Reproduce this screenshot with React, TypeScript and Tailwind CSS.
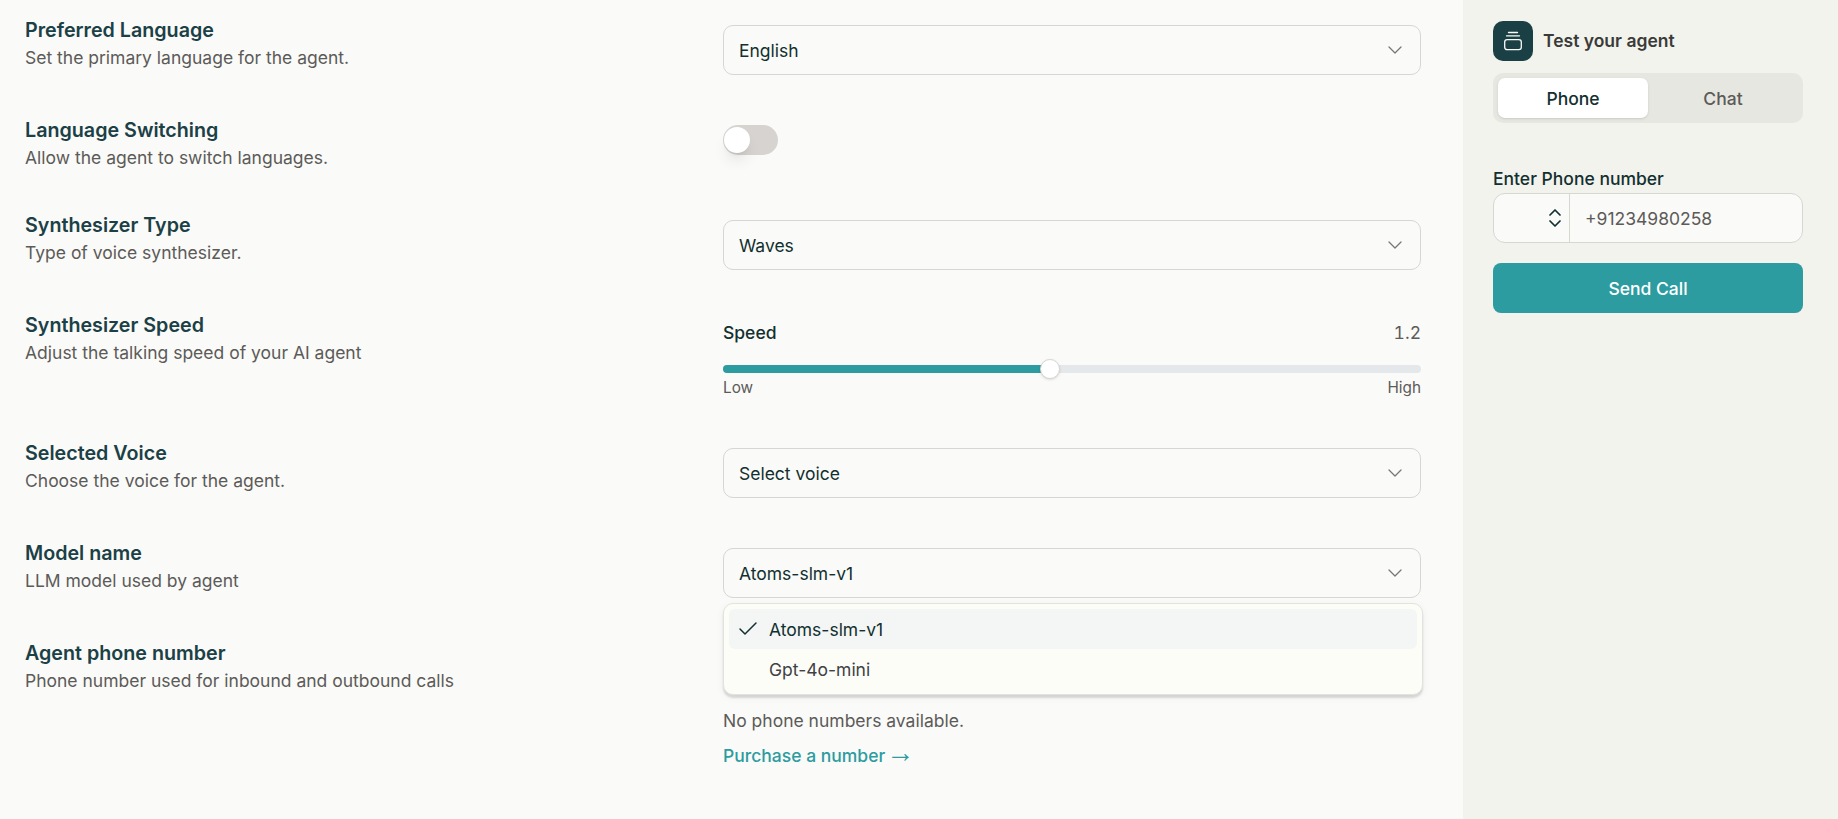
import React from "react";
import { ChevronDown, Check, ChevronsUpDown } from "lucide-react";

function Info({ title, desc }: { title: string; desc: string }) {
  return (
    <div className="w-[698px] shrink-0">
      <div className="text-[19.7px] leading-[25px] font-semibold text-[#1b4046]">{title}</div>
      <div className="mt-[3px] text-[17.5px] leading-[24px] text-[#5c5b58]">{desc}</div>
    </div>
  );
}

function Select({ value }: { value: string }) {
  return (
    <div className="mt-[7px] flex h-[50px] w-[698px] items-center justify-between rounded-[10px] border border-[#d6d6d3] bg-[#fafaf8] pl-[15px] pr-[13px]">
      <span className="pt-[2px] text-[17.5px] text-[#12302f]">{value}</span>
      <ChevronDown size={24} className="text-[#77767a]" strokeWidth={1.25} />
    </div>
  );
}

export default function App() {
  return (
    <div className="flex h-[819px] w-full overflow-hidden bg-[#fafaf8] font-['Inter',sans-serif]">
      <main className="w-[1463px] shrink-0 pl-[25px] pt-[18px]">
        <div className="flex h-[57px]">
          <Info title="Preferred Language" desc="Set the primary language for the agent." />
          <Select value="English" />
        </div>
        <div className="mt-[43px] flex h-[52px]">
          <Info title="Language Switching" desc="Allow the agent to switch languages." />
          <div className="mt-[7px] flex h-[30px] w-[55px] items-center rounded-full bg-[#d6d3d1] pl-[1px]">
            <div className="h-[26px] w-[26px] rounded-full bg-white shadow-lg" />
          </div>
        </div>
        <div className="mt-[43px] flex h-[57px]">
          <Info title="Synthesizer Type" desc="Type of voice synthesizer." />
          <Select value="Waves" />
        </div>
        <div className="mt-[43px] flex h-[85px]">
          <Info title="Synthesizer Speed" desc="Adjust the talking speed of your AI agent" />
          <div className="w-[698px] pt-[8px]">
            <div className="flex h-[24px] items-center justify-between text-[17.5px]">
              <span className="font-medium text-[#12302f]">Speed</span>
              <span className="tabular-nums text-[#5c5b58]">1.2</span>
            </div>
            <div className="relative mt-[20px] h-[8px] rounded-full bg-[#e4e8ea]">
              <div className="h-full w-[326px] rounded-full bg-[#2d9ca0]" />
              <div className="absolute left-[317px] top-[-6px] h-[20px] w-[20px] rounded-full border border-[#d6d6d3] bg-white shadow-sm" />
            </div>
            <div className="mt-[5px] flex justify-between text-[15.3px] leading-[20px] text-[#5c5b58]">
              <span>Low</span>
              <span>High</span>
            </div>
          </div>
        </div>
        <div className="mt-[43px] flex h-[57px]">
          <Info title="Selected Voice" desc="Choose the voice for the agent." />
          <Select value="Select voice" />
        </div>
        <div className="mt-[43px] flex h-[57px]">
          <Info title="Model name" desc="LLM model used by agent" />
          <div className="relative h-[57px]">
            <Select value="Atoms-slm-v1" />
            <div className="absolute left-0 top-[62px] z-10 h-[92px] w-[700px] rounded-[10px] border border-[#e2e2df] bg-[#fdfdf8] px-[5px] pt-[5px] shadow-[0_3px_2px_rgba(0,0,0,0.12),0_2px_8px_rgba(0,0,0,0.05)]">
              <div className="relative flex h-[40px] items-center rounded-[6px] bg-[#f4f6f6] pl-[40px] pr-[10px]">
                <Check size={24} strokeWidth={1.5} className="absolute left-[7px] text-[#12302f]" />
                <span className="pt-[2px] text-[17.5px] text-[#12302f]">Atoms-slm-v1</span>
              </div>
              <div className="flex h-[40px] items-center pl-[40px] pt-[2px] text-[17.5px] text-[#3f4144]">Gpt-4o-mini</div>
            </div>
          </div>
        </div>
        <div className="mt-[43px] flex">
          <Info title="Agent phone number" desc="Phone number used for inbound and outbound calls" />
          <div className="pt-[68px]">
            <div className="text-[17.5px] leading-[24px] text-[#5c5b58]">No phone numbers available.</div>
            <div className="mt-[10px] h-[24px] text-[17.5px] leading-[24px] font-medium text-[#2d9ca0]">
              <span>Purchase a number</span>
              <span className="ml-[1px] font-['Liberation_Sans',sans-serif] text-[28px] leading-[20px] font-normal">→</span>
            </div>
          </div>
        </div>
      </main>
      <aside className="flex-1 bg-[#f3f3ee] pl-[30px] pr-[35px] pt-[21px]">
        <div className="flex items-center gap-[10px]">
          <div className="flex h-[40px] w-[40px] items-center justify-center rounded-[10px] bg-[#1a4045]">
            <svg width="20" height="20" viewBox="0 0 20 20" fill="none" stroke="#fafaf8" strokeWidth="1.3" strokeLinecap="round">
              <path d="M5.5 1.5h9" />
              <path d="M3.5 4.8h13" />
              <rect x="1.7" y="8.7" width="16.6" height="10" rx="2.4" />
            </svg>
          </div>
          <span className="text-[17.5px] font-semibold text-[#3a3a38]">Test your agent</span>
        </div>
        <div className="mt-[12px] flex h-[50px] rounded-[10px] bg-[#e7e7e2] p-[5px]">
          <div className="flex flex-1 items-center justify-center rounded-[7px] bg-white pt-[2px] text-[17.5px] font-medium text-[#12302f] shadow-sm">Phone</div>
          <div className="flex flex-1 items-center justify-center pt-[2px] text-[17.5px] font-medium text-[#5c5b58]">Chat</div>
        </div>
        <div className="mt-[44px] text-[17.5px] leading-[24px] font-medium text-[#12302f]">Enter Phone number</div>
        <div className="mt-[2px] flex h-[50px] rounded-[12px] border border-[#d6d6d3] bg-[#fafaf8]">
          <div className="flex w-[76px] items-center justify-end border-r border-[#d6d6d3] pr-[2px]">
            <ChevronsUpDown size={24} strokeWidth={1.75} className="text-[#12302f]" />
          </div>
          <div className="flex flex-1 items-center pl-[15px] pt-[2px] text-[17.5px] text-[#5c5b58]">+91234980258</div>
        </div>
        <div className="mt-[20px] flex h-[50px] items-center justify-center rounded-[8px] bg-[#2d9ca0] pt-[2px] text-[17.5px] font-medium text-white">Send Call</div>
      </aside>
    </div>
  );
}
